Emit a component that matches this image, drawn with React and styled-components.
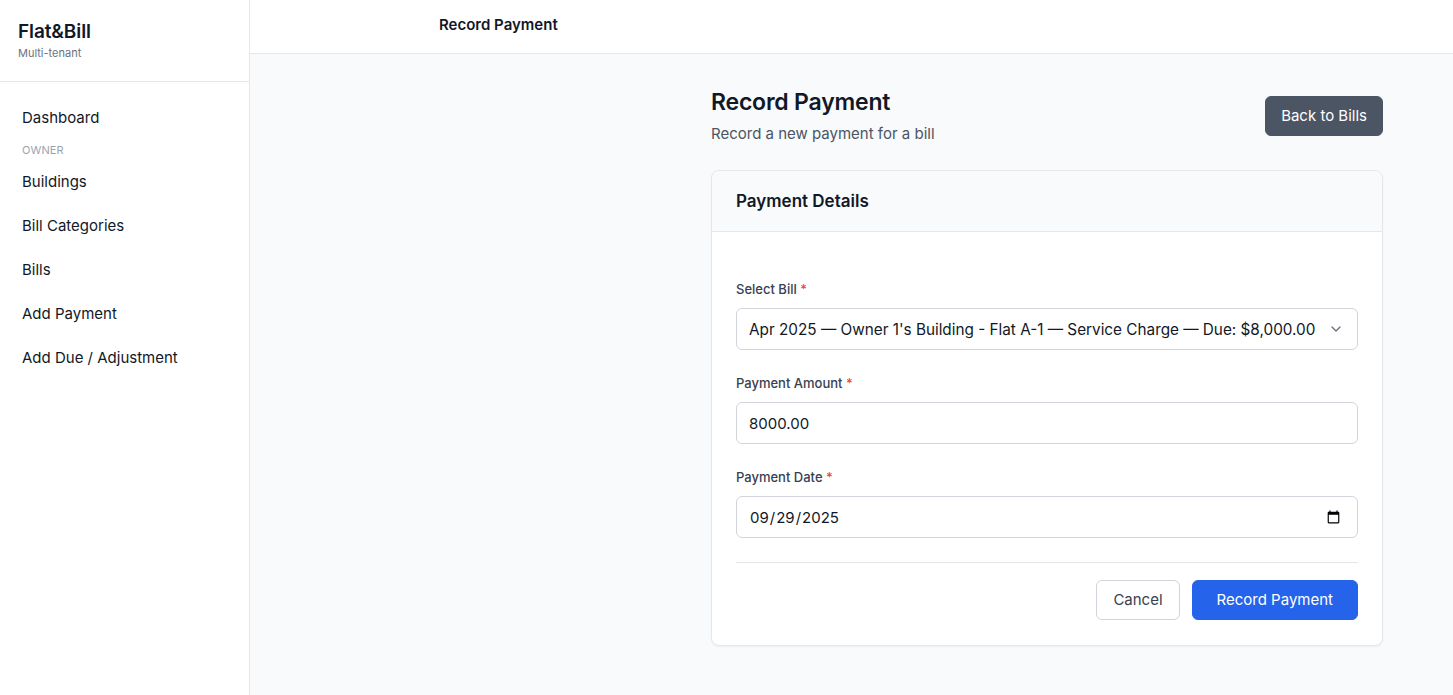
import React from "react";
import styled, { createGlobalStyle } from "styled-components";

const Global = createGlobalStyle`
  * { box-sizing: border-box; }
  html, body { margin: 0; padding: 0; }
  body {
    font-family: Inter, "Noto Sans", "Liberation Sans", sans-serif;
    color: #111827;
    background: #f9fafb;
    -webkit-font-smoothing: antialiased;
  }
`;

const Layout = styled.div`
  display: flex;
  min-height: 695px;
`;

const Sidebar = styled.aside`
  width: 250px;
  flex-shrink: 0;
  background: #ffffff;
  border-right: 1px solid #e5e7eb;
  display: flex;
  flex-direction: column;
`;

const Brand = styled.div`
  height: 82px;
  padding: 21px 18px 0;
  border-bottom: 1px solid #e5e7eb;
`;

const BrandName = styled.div`
  font-size: 19px;
  font-weight: 600;
  line-height: 22px;
  letter-spacing: -0.1px;
  color: #111827;
`;

const BrandSub = styled.div`
  font-size: 11px;
  line-height: 14px;
  margin-top: 3px;
  color: #6b7280;
`;

const Nav = styled.nav`
  display: flex;
  flex-direction: column;
  padding: 14px 12px 0 22px;
`;

const NavItem = styled.a`
  display: block;
  font-size: 15px;
  line-height: 20px;
  padding: 12px 0;
  color: #111827;
  text-decoration: none;
  cursor: pointer;
`;

const NavSection = styled.div`
  font-size: 11px;
  line-height: 14px;
  text-transform: uppercase;
  color: #9ca3af;
  margin: 3px 0 3px;
  letter-spacing: 0.1px;
`;

const Main = styled.div`
  flex: 1;
  display: flex;
  flex-direction: column;
  min-width: 0;
`;

const TopBar = styled.header`
  height: 54px;
  background: #ffffff;
  border-bottom: 1px solid #e5e7eb;
  display: flex;
  align-items: center;
  padding-left: 189px;
  padding-bottom: 5px;
`;

const TopTitle = styled.div`
  font-size: 15px;
  font-weight: 600;
  color: #111827;
`;

const Content = styled.main`
  padding: 34px 0 40px 461px;
`;

const Container = styled.div`
  width: 672px;
`;

const PageHead = styled.div`
  display: flex;
  justify-content: space-between;
  align-items: flex-start;
  margin-bottom: 26px;
`;

const PageTitle = styled.h1`
  margin: 0;
  font-size: 23px;
  line-height: 28px;
  font-weight: 600;
  letter-spacing: -0.2px;
  color: #111827;
`;

const PageSub = styled.p`
  margin: 8px 0 0;
  font-size: 15px;
  line-height: 20px;
  color: #4b5563;
`;

const Button = styled.button`
  font-family: inherit;
  font-size: 15px;
  line-height: 20px;
  height: ${(p) => p.$h || 40}px;
  padding: 0 ${(p) => p.$px || 16}px;
  border-radius: 6px;
  cursor: pointer;
  border: 1px solid
    ${(p) =>
      p.$variant === "dark" ? "#4b5563" : p.$variant === "primary" ? "#2563eb" : "#d1d5db"};
  background: ${(p) =>
    p.$variant === "dark" ? "#4b5563" : p.$variant === "primary" ? "#2563eb" : "#ffffff"};
  color: ${(p) => (p.$variant === "outline" ? "#374151" : "#ffffff")};
`;

const BackButton = styled(Button)`
  margin-top: 8px;
`;

const Card = styled.section`
  background: #ffffff;
  border: 1px solid #e5e7eb;
  border-radius: 8px;
  box-shadow: 0 1px 2px rgba(0, 0, 0, 0.05);
  overflow: hidden;
`;

const CardHeader = styled.div`
  height: 61px;
  background: #f9fafb;
  border-bottom: 1px solid #e5e7eb;
  display: flex;
  align-items: center;
  padding: 0 24px;
`;

const CardTitle = styled.h2`
  margin: 0;
  font-size: 17px;
  font-weight: 600;
  color: #111827;
`;

const CardBody = styled.form`
  padding: 49px 24px 25px;
  display: flex;
  flex-direction: column;
`;

const Field = styled.div`
  display: flex;
  flex-direction: column;
  margin-bottom: ${(p) => (p.$last ? 24 : 25)}px;
`;

const Label = styled.label`
  font-size: 13px;
  line-height: 16px;
  color: #374151;
  margin-bottom: 11px;
  font-weight: 500;
`;

const Req = styled.span`
  color: #ef4444;
`;

const controlCss = `
  width: 100%;
  height: 42px;
  border: 1px solid #d1d5db;
  border-radius: 6px;
  background: #ffffff;
  font-family: Inter, "Noto Sans", sans-serif;
  font-size: 15px;
  color: #111827;
  padding: 0 12px;
  outline: none;
`;

const SelectWrap = styled.div`
  position: relative;
`;

const Select = styled.select`
  ${controlCss}
  font-size: 15.3px;
  appearance: none;
  -webkit-appearance: none;
  padding-right: 40px;
`;

const Chevron = styled.svg`
  position: absolute;
  right: 14px;
  top: 13px;
  pointer-events: none;
`;

const Input = styled.input`
  ${controlCss}
  &::-webkit-calendar-picker-indicator {
    margin-right: 2px;
  }
`;

const Divider = styled.hr`
  border: 0;
  border-top: 1px solid #e5e7eb;
  margin: 0 0 17px;
`;

const Actions = styled.div`
  display: flex;
  justify-content: flex-end;
  gap: 12px;
`;

const nav = ["Buildings", "Bill Categories", "Bills", "Add Payment", "Add Due / Adjustment"];

export default function App() {
  return (
    <>
      <Global />
      <Layout>
        <Sidebar>
          <Brand>
            <BrandName>Flat&amp;Bill</BrandName>
            <BrandSub>Multi-tenant</BrandSub>
          </Brand>
          <Nav>
            <NavItem>Dashboard</NavItem>
            <NavSection>Owner</NavSection>
            {nav.map((n) => (
              <NavItem key={n}>{n}</NavItem>
            ))}
          </Nav>
        </Sidebar>
        <Main>
          <TopBar>
            <TopTitle>Record Payment</TopTitle>
          </TopBar>
          <Content>
            <Container>
              <PageHead>
                <div>
                  <PageTitle>Record Payment</PageTitle>
                  <PageSub>Record a new payment for a bill</PageSub>
                </div>
                <BackButton $variant="dark" $px={15}>
                  Back to Bills
                </BackButton>
              </PageHead>
              <Card>
                <CardHeader>
                  <CardTitle>Payment Details</CardTitle>
                </CardHeader>
                <CardBody onSubmit={(e) => e.preventDefault()}>
                  <Field>
                    <Label>
                      Select Bill <Req>*</Req>
                    </Label>
                    <SelectWrap>
                      <Select defaultValue="1">
                        <option value="1">
                          Apr 2025 — Owner 1's Building - Flat A-1 — Service Charge — Due: $8,000.00
                        </option>
                      </Select>
                      <Chevron width="16" height="16" viewBox="0 0 24 24" fill="none" stroke="#6b7280" strokeWidth="2" strokeLinecap="round" strokeLinejoin="round">
                        <path d="m6 9 6 6 6-6" />
                      </Chevron>
                    </SelectWrap>
                  </Field>
                  <Field>
                    <Label>
                      Payment Amount <Req>*</Req>
                    </Label>
                    <Input type="text" defaultValue="8000.00" />
                  </Field>
                  <Field $last>
                    <Label>
                      Payment Date <Req>*</Req>
                    </Label>
                    <Input type="date" defaultValue="2025-09-29" />
                  </Field>
                  <Divider />
                  <Actions>
                    <Button type="button" $variant="outline" $px={16}>
                      Cancel
                    </Button>
                    <Button type="submit" $variant="primary" $px={24}>
                      Record Payment
                    </Button>
                  </Actions>
                </CardBody>
              </Card>
            </Container>
          </Content>
        </Main>
      </Layout>
    </>
  );
}
